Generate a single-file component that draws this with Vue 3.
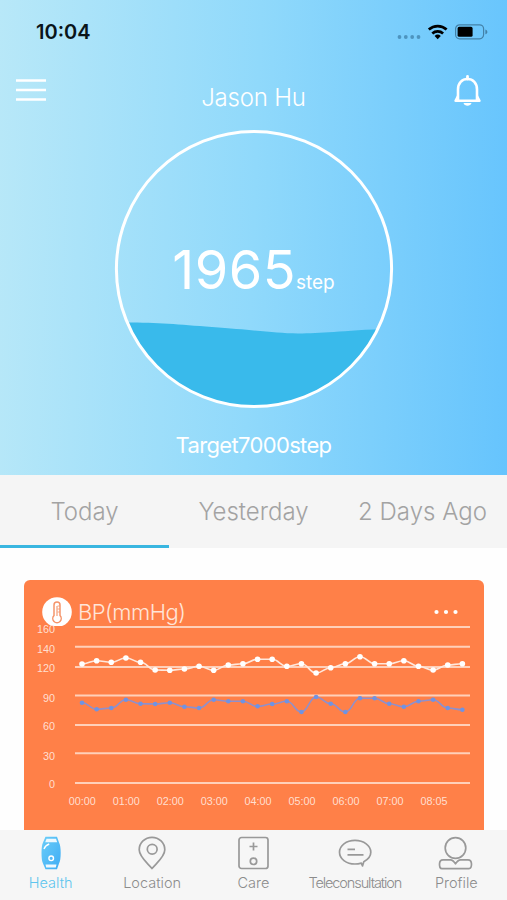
<template>
  <div class="screen">
    <section class="hero">
      <div class="status-bar">
        <span class="clock">10:04</span>
        <svg class="status-icons" width="92" height="20" viewBox="0 0 92 20">
          <g fill="#4d94bf">
            <circle cx="3.5" cy="14" r="1.9" />
            <circle cx="9.8" cy="14" r="1.9" />
            <circle cx="16.2" cy="14" r="1.9" />
            <circle cx="22.5" cy="14" r="1.9" />
          </g>
          <g fill="none" stroke="#000" stroke-width="2.7">
            <path d="M32.8 6.6a13.2 13.2 0 0 1 17.800 0" />
            <path d="M36.3 10.4a8 8 0 0 1 10.800 0" />
          </g>
          <path d="M38.6 13a4.6 4.6 0 0 1 6.2 0L41.7 16.2z" fill="#000" />
          <rect x="59.6" y="1.8" width="28" height="14" rx="4" fill="none" stroke="#4381a8" stroke-width="1.2" />
          <rect x="61.6" y="3.8" width="15" height="10" rx="1.6" fill="#000" />
          <path d="M89.4 6.5c2.6.8 2.6 4 0 4.8z" fill="#4381a8" />
        </svg>
      </div>

      <header class="title-bar">
        <svg class="menu-icon" width="32" height="26" viewBox="0 0 32 26">
          <path d="M0 3.5h30M0 13h30M0 22.500h30" stroke="#fff" stroke-width="2.6" />
        </svg>
        <h1 class="user-name">Jason Hu</h1>
        <svg class="bell-icon" width="30" height="34" viewBox="0 0 30 34" fill="none" stroke="#fff">
          <path d="M5 26.500V15.500C5 9 9 5 14.500 5S24 9 24 15.500v11" stroke-width="2.6" />
          <path d="M14.500 5V2.500" stroke-width="2.8" stroke-linecap="round" />
          <path d="M5 22L2.500 26.800h24L24 22" stroke-width="2.4" stroke-linejoin="round" />
          <path d="M10.500 29h8c-.8 3.7-7.2 3.7-8 0z" fill="#fff" stroke="none" />
        </svg>
      </header>

      <div class="gauge">
        <svg class="gauge-ring" width="280" height="280" viewBox="0 0 280 280">
          <clipPath id="ring-clip">
            <circle cx="140" cy="140" r="137.5" />
          </clipPath>
          <path
            d="M0 193.500C40 193 60 195 98 198C140 201 160 204 184 204.500C208 204.500 225 202 280 199.500V280H0z"
            fill="#39baeb"
            clip-path="url(#ring-clip)"
          />
          <circle cx="140" cy="140" r="137.6" fill="none" stroke="#fff" stroke-width="3" />
        </svg>
        <p class="steps">
          <span class="steps-value">{{ steps }}</span><span class="steps-unit">step</span>
        </p>
      </div>

      <p class="target">Target{{ target }}step</p>
    </section>

    <nav class="day-tabs">
      <button
        v-for="(day, i) in days"
        :key="day"
        class="day-tab"
        :class="{ active: i === activeDay }"
        @click="activeDay = i"
      >
        {{ day }}
      </button>
    </nav>

    <main class="content">
      <article class="card">
        <div class="card-header">
          <svg class="card-icon" width="30" height="30" viewBox="0 0 30 30">
            <circle cx="15" cy="15" r="14.8" fill="#fff" />
            <g fill="none" stroke="#f5946a" stroke-width="1.5">
              <path d="M12 18.500V8a3 3 0 0 1 6 0v10.500a4.200 4.200 0 1 1-6 0z" />
              <path d="M15 9v10" stroke-width="1.1" />
              <path d="M15.500 9h2.500M15.500 12h2.500M15.500 15h2.500" stroke-width=".8" />
            </g>
          </svg>
          <h2 class="card-title">BP(mmHg)</h2>
          <svg class="more-icon" width="24" height="6" viewBox="0 0 24 6" fill="#fff">
            <circle cx="2.5" cy="3" r="2.1" />
            <circle cx="12" cy="3" r="2.1" />
            <circle cx="21.5" cy="3" r="2.1" />
          </svg>
        </div>

        <!-- chart coordinates start at the card's left edge -->
        <svg class="chart" width="460" height="205" viewBox="0 0 460 205">
          <rect width="460" height="205" fill="#ff8048" />
          <g v-for="line in gridLines" :key="line.label">
            <path :d="`M51 ${line.y}H446`" class="grid-line" />
            <text :x="31" :y="line.text" class="axis-label" text-anchor="end">{{ line.label }}</text>
          </g>
          <text
            v-for="(time, i) in times"
            :key="time"
            :x="58.3 + i * 43.95"
            y="179"
            class="axis-label"
            text-anchor="middle"
          >
            {{ time }}
          </text>
          <g v-for="s in series" :key="s.name">
            <path :d="smoothPath(s.values)" fill="none" :stroke="s.line" stroke-width="1.6" />
            <circle
              v-for="(v, i) in s.values"
              :key="i"
              :cx="pointX(i)"
              :cy="v"
              :r="s.radius"
              :fill="s.dot"
            />
          </g>
        </svg>
      </article>
    </main>

    <nav class="tab-bar">
      <a class="tab active">
        <svg width="36" height="36" viewBox="0 0 36 36">
          <defs>
            <linearGradient id="band" x1="0" x2="1" y1="0" y2="1">
              <stop offset="0" stop-color="#6bcdf8" />
              <stop offset="1" stop-color="#3fadf5" />
            </linearGradient>
          </defs>
          <path d="M12.500 1.800h11.500l2 5.700c2.300 3 2.300 18 0 21l-2 5.700H12.500l-2.500-5.700c-2-3-2-18 0-21z" fill="url(#band)" />
          <path d="M13.500 3.800h9.500l1.200 3.500H12.200zM12.500 29.500h11l-.7 3H13.200z" fill="#eef9ff" />
          <path d="M11 14c.8-2.500 2.500-4 5.200-5" stroke="#fff" stroke-width="1.4" fill="none" />
          <circle cx="18.2" cy="23.3" r="2.3" fill="none" stroke="#fff" stroke-width="1.4" />
        </svg>
        <span>Health</span>
      </a>
      <a class="tab">
        <svg width="36" height="36" viewBox="0 0 36 36" class="line-icon">
          <path d="M18 33.500C14 28.500 5.200 22 5.200 14.800a12.800 12.500 0 0 1 25.600 0C30.800 22 22 28.500 18 33.500z" />
          <circle cx="18.2" cy="14.2" r="4.9" />
        </svg>
        <span>Location</span>
      </a>
      <a class="tab">
        <svg width="36" height="36" viewBox="0 0 36 36" class="line-icon">
          <rect x="4" y="2.5" width="29" height="31" rx="2.5" />
          <path d="M18.500 7.500v8M14.500 11.500h8" />
          <circle cx="18.5" cy="26.3" r="3.2" />
        </svg>
        <span>Care</span>
      </a>
      <a class="tab">
        <svg width="36" height="36" viewBox="0 0 36 36" class="line-icon">
          <path d="M25.500 31L24.300 28.100C22.500 28.600 20.400 29 18 29 9.200 29 2.500 23.800 2.500 17.200S9.200 5.400 18 5.400s15.800 5.200 15.800 11.800c0 3.700-2.800 7.200-7 9.500z" />
          <path d="M10.500 14.300h7.500M10.500 19.800h16" />
        </svg>
        <span class="tight">Teleconsultation</span>
      </a>
      <a class="tab">
        <svg width="36" height="36" viewBox="0 0 36 36" class="line-icon">
          <circle cx="17.5" cy="13" r="10.3" />
          <path d="M5 24.800h7.500c2 0 3.200 1.200 5 4 1.800-2.800 3-4 5-4H30c2.200 0 3.400 1.200 3.500 4.200 0 3.300-.5 4.600-2.500 4.600H4c-2 0-2.500-1.300-2.500-4.600.1-3 1.300-4.200 3.500-4.200z" />
        </svg>
        <span>Profile</span>
      </a>
    </nav>
  </div>
</template>

<script setup>
import { ref } from 'vue'

const steps = ref(1965)
const target = ref(7000)

const days = ['Today', 'Yesterday', '2 Days Ago']
const activeDay = ref(0)

// Vertical positions inside the chart
const gridLines = [
  { label: '160', y: 0.9, text: 7 },
  { label: '140', y: 20.8, text: 27 },
  { label: '120', y: 41, text: 46 },
  { label: '90', y: 69.5, text: 75.5 },
  { label: '60', y: 99, text: 104 },
  { label: '30', y: 127.3, text: 133.5 },
  { label: '0', y: 157, text: 162 },
]

const times = ['00:00', '01:00', '02:00', '03:00', '04:00', '05:00', '06:00', '07:00', '08:05']

const series = [
  {
    name: 'systolic',
    line: '#ffe8dc',
    dot: '#fff',
    radius: 2.8,
    values: [
      38, 34.7, 36.3, 32, 36.3, 44, 44.3, 43, 40.3, 44.3, 39, 37.7, 33.3, 33.3, 40.3, 37.7, 47,
      41.7, 37.7, 30.7, 37.7, 37.7, 34.7, 40.3, 44, 39, 37.7,
    ],
  },
  {
    name: 'diastolic',
    line: '#8f90cc',
    dot: '#6f93e3',
    radius: 2.3,
    values: [
      76.7, 83.3, 82, 73.7, 77.7, 78, 76.7, 80.7, 82, 73.7, 75.3, 75.3, 80.3, 78, 75.3, 86, 71,
      77.7, 86, 72.3, 72.3, 77.7, 80.7, 75.3, 73.7, 82, 83.7,
    ],
  },
]

const pointX = (i) => 58 + i * 14.63

// Horizontal control points give the soft steps between samples
const smoothPath = (values) =>
  values
    .map((v, i) => {
      const x = pointX(i)
      if (i === 0) return `M${x} ${v}`
      return `C${x - 8} ${values[i - 1]} ${x - 6.6} ${v} ${x} ${v}`
    })
    .join('')
</script>

<style>
body {
  margin: 0;
  background: #fff;
}
</style>

<style scoped>
.screen {
  display: flex;
  flex-direction: column;
  width: 507px;
  height: 900px;
  overflow: hidden;
  background: #fefefe;
  font-family: Inter, 'Liberation Sans', sans-serif;
}

.hero {
  box-sizing: border-box;
  flex: none;
  height: 475px;
  background: linear-gradient(92deg, #b8e8f8 0%, #90d9fb 50%, #66c4fd 100%);
  color: #fff;
}

.status-bar {
  display: flex;
  justify-content: space-between;
  align-items: center;
  height: 64px;
  padding: 0 19px 0 36px;
}

.clock {
  color: #0a1419;
  font-size: 20px;
  font-weight: 600;
}

.status-icons {
  margin-top: 2px;
}

.title-bar {
  display: grid;
  grid-template-columns: 60px 1fr 60px;
  align-items: center;
  height: 66px;
}

.menu-icon {
  margin: -14px 0 0 16px;
}

.user-name {
  margin: 1px 0 0;
  font-size: 24px;
  font-weight: 300;
  letter-spacing: -0.2px;
  text-align: center;
}

.bell-icon {
  margin: -12px 0 0 6px;
}

.gauge {
  display: grid;
  justify-content: center;
  margin-top: -1px;
}

.gauge-ring,
.steps {
  grid-area: 1 / 1;
}

.gauge-ring {
  display: block;
}

.steps {
  margin: 14px 0 0;
  align-self: center;
  text-align: center;
  line-height: 60px;
}

.steps-value {
  font-size: 54px;
  letter-spacing: 0.5px;
}

.steps-unit {
  font-size: 19px;
}

.target {
  margin: 22px 0 0;
  font-size: 22px;
  letter-spacing: -0.65px;
  line-height: 28px;
  text-align: center;
}

.day-tabs {
  display: grid;
  flex: none;
  grid-template-columns: repeat(3, 1fr);
  height: 73px;
  background: #f5f5f5;
}

.day-tab {
  padding: 3px 0 0;
  border: 0;
  border-bottom: 3px solid transparent;
  background: none;
  color: #a3a3a3;
  font-family: inherit;
  font-size: 24px;
  font-weight: 300;
  white-space: nowrap;
}

.day-tab.active {
  border-bottom-color: #39b6e0;
}

.content {
  flex: 1;
  min-height: 0;
  padding: 32px 23px 0 24px;
  overflow: hidden;
}

.card {
  height: 260px;
  border-radius: 6px;
  background: #ff8048;
  overflow: hidden;
}

.card-header {
  display: flex;
  align-items: center;
  height: 46px;
  padding: 0 26px 0 18px;
}

.card-icon {
  flex: none;
  margin-top: 18px;
}

.card-title {
  margin: 17px 0 0 6px;
  color: #ffe5d8;
  font-size: 22px;
  font-weight: 300;
  letter-spacing: -0.5px;
}

.more-icon {
  margin: 17px 0 0 auto;
}

.chart {
  display: block;
  overflow: visible;
}

.grid-line {
  stroke: #ffd0ba;
  stroke-width: 2;
}

.axis-label {
  fill: #ffdfd0;
  font-family: 'Liberation Sans', sans-serif;
  font-size: 10.8px;
}

.tab-bar {
  display: grid;
  flex: none;
  grid-template-columns: repeat(5, 1fr);
  height: 70px;
  background: #f6f6f6;
}

.tab {
  display: flex;
  flex-direction: column;
  align-items: center;
  padding-top: 5px;
  color: #8c8c8c;
  font-size: 14.5px;
  font-weight: 300;
  line-height: 24px;
}

.tab.active {
  color: #5ec5ee;
}

.tight {
  letter-spacing: -1.1px;
}

.line-icon {
  fill: none;
  stroke: #999;
  stroke-width: 1.7;
  stroke-linejoin: round;
}
</style>
